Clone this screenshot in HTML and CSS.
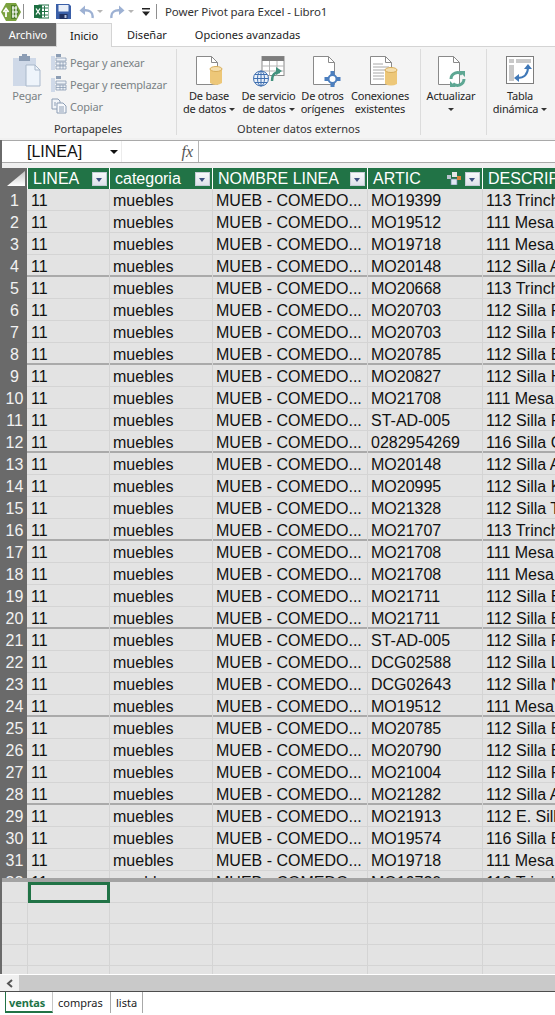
FILE: index.html
```html
<!DOCTYPE html>
<html lang="es">
<head>
<meta charset="utf-8">
<title>Power Pivot para Excel - Libro1</title>
<link rel="stylesheet" href="styles.css">
</head>
<body>
<div class="app">
  <header class="titlebar">
    <svg class="qat-logo" width="20" height="18" viewBox="0 0 20 18"><path d="M5 0h10l5 9-5 9H5L0 9z" fill="#7ba23f"/><path d="M10 2h5l3 7-3 7h-5z" fill="#4f7f2a"/><path d="M11 5h5M11 9h6M11 13h5M12 3v12M15 3v12" stroke="#fff" stroke-width="1.2" fill="none"/><path d="M5 14V8M2.500 9 5 5.500 7.500 9" stroke="#fff" stroke-width="1.800" fill="none"/></svg>
    <i class="qat-sep qat-sep-a"></i>
    <svg class="qat-excel" width="15" height="15" viewBox="0 0 15 15"><rect x="5" y="1" width="10" height="13" fill="#fff" stroke="#217346"/><path d="M7 4h7M7 7.500h7M7 11h7M10.500 2v11" stroke="#217346"/><rect y="1" width="8" height="13" fill="#1e6f42"/><path d="M2 4.500 6 10.500M6 4.500 2 10.500" stroke="#fff" stroke-width="1.300"/></svg>
    <svg class="qat-save" width="15" height="15" viewBox="0 0 15 15"><path d="M0 0h13l2 2v13H0z" fill="#3a5fa8"/><rect x="2.500" y="1" width="10" height="6.500" fill="#e8eef8"/><rect x="3.500" y="10" width="8" height="5" fill="#20305f"/><rect x="8.500" y="11" width="2" height="3" fill="#b7c4df"/></svg>
    <svg class="qat-undo" width="15" height="14" viewBox="0 0 15 14"><path d="M13.500 13C14.500 7 10 4.500 4 5.500" fill="none" stroke="#9db1d3" stroke-width="2.400"/><path d="M6 .5 0.500 5.500 6 10z" fill="#9db1d3"/></svg>
    <i class="caret caret-pale qat-c1"></i>
    <svg class="qat-redo" width="15" height="14" viewBox="0 0 15 14"><path d="M1.500 13C.5 7 5 4.500 11 5.500" fill="none" stroke="#9db1d3" stroke-width="2.400"/><path d="M9 .5 14.500 5.500 9 10z" fill="#9db1d3"/></svg>
    <i class="caret caret-pale qat-c2"></i>
    <svg class="qat-custom" width="8" height="8" viewBox="0 0 8 8"><path d="M0 0h8v1.500H0zM0 3.500h8L4 8z" fill="#222"/></svg>
    <i class="qat-sep qat-sep-b"></i>
    <span class="title-text">Power Pivot para Excel - Libro1</span>
  </header>

  <nav class="tabs">
    <span class="tab tab-file">Archivo</span>
    <span class="tab tab-active">Inicio</span>
    <span class="tab tab-design">Diseñar</span>
    <span class="tab tab-adv">Opciones avanzadas</span>
  </nav>

  <section class="ribbon">
    <div class="group group-clip">
      <div class="group-body">
        <div class="btn btn-paste">
          <svg class="btn-icon" width="28" height="34" viewBox="0 0 28 34"><rect x="0" y="4" width="23" height="28" fill="#cfd9e8"/><rect x="6" y="2" width="11" height="5" fill="#8c9db4"/><rect x="9" y="0" width="5" height="3" fill="#8c9db4"/><path d="M13 11h9l5 5v16H13z" fill="#eef4fb" stroke="#a9b8cb"/><path d="M22 11v5h5" fill="none" stroke="#a9b8cb"/></svg>
          <span class="lbl lbl-muted">Pegar</span>
        </div>
        <div class="small-col">
          <div class="small-btn">
            <svg width="16" height="16" viewBox="0 0 16 16"><rect y="2" width="4" height="14" fill="#cfd9e8"/><rect x="5" y="0" width="5" height="3" fill="#8c9db4"/><path d="M5 4h10v3H5zM5 8h10v3H5zM5 12h10v3H5z" fill="#eef2f7" stroke="#8c9db4" stroke-width=".8"/><path d="M9 8v7M12 8v7" stroke="#8c9db4" stroke-width=".8"/></svg>
            <span class="lbl-muted">Pegar y anexar</span>
          </div>
          <div class="small-btn">
            <svg width="16" height="16" viewBox="0 0 16 16"><rect y="2" width="4" height="14" fill="#cfd9e8"/><rect x="5" y="0" width="5" height="3" fill="#8c9db4"/><path d="M5 5h10v3H5zM5 9h10v5H5z" fill="#eef2f7" stroke="#8c9db4" stroke-width=".8"/><path d="M5 11.500h10M9 9v5M12 9v5" stroke="#8c9db4" stroke-width=".8"/></svg>
            <span class="lbl-muted">Pegar y reemplazar</span>
          </div>
          <div class="small-btn">
            <svg width="16" height="16" viewBox="0 0 16 16"><path d="M1 1h6l2 2v8H1z" fill="#f2f5f9" stroke="#8c9db4"/><path d="M6 5h6l3 3v7H6z" fill="#f7f9fc" stroke="#8c9db4"/><path d="M3 5h2M3 7h2M8 9h5M8 11h5M8 13h5" stroke="#8c9db4"/></svg>
            <span class="lbl-muted">Copiar</span>
          </div>
        </div>
      </div>
      <div class="group-name">Portapapeles</div>
    </div>

    <div class="group group-ext">
      <div class="group-body">
        <div class="btn btn-base">
          <svg class="btn-icon" width="44" height="32" viewBox="0 0 44 32"><path d="M9.500 .5h15l6 6v22h-21z" fill="#fff" stroke="#8a8a8a"/><path d="M24.500 .5v6h6" fill="none" stroke="#8a8a8a"/><path d="M23 13h12v14q-6 4-12 0z" fill="#edc778"/><ellipse cx="29" cy="13" rx="6" ry="2.500" fill="#f5dfae" stroke="#d8ad5a"/></svg>
          <span class="lbl">De base</span>
          <span class="lbl">de datos<i class="caret"></i></span>
        </div>
        <div class="btn btn-serv">
          <svg class="btn-icon" width="44" height="32" viewBox="0 0 44 32"><rect x="10" y=".5" width="22" height="19" fill="#fff" stroke="#8a8a8a"/><rect x="10" y=".5" width="22" height="4.500" fill="#7d7d7d"/><path d="M10 10h22M10 15h22M17.500 5v15M25 5v15" stroke="#b5b5b5"/><path d="M20 25c0-7 3-9 8-9" fill="none" stroke="#41917d" stroke-width="2.400"/><path d="M24 11h8l-4 6z" fill="#41917d" transform="rotate(-90 28 15)"/><circle cx="9" cy="22.500" r="7.500" fill="#eaf1fa" stroke="#3f6fb0"/><path d="M1.500 22.500h15M9 15v15M2.800 18.500h12.400M2.800 26.500h12.400" stroke="#3f6fb0"/><ellipse cx="9" cy="22.500" rx="3.500" ry="7.500" fill="none" stroke="#3f6fb0"/></svg>
          <span class="lbl">De servicio</span>
          <span class="lbl">de datos<i class="caret"></i></span>
        </div>
        <div class="btn btn-other">
          <svg class="btn-icon" width="44" height="32" viewBox="0 0 44 32"><path d="M9.500 .5h15l6 6v22h-21z" fill="#fff" stroke="#8a8a8a"/><path d="M24.500 .5v6h6" fill="none" stroke="#8a8a8a"/><circle cx="28.500" cy="23" r="4" fill="#fff" stroke="#4c7fbf" stroke-width="2"/><path d="M26.500 15h4v4h-4zM26.500 27h4v4h-4zM20.500 21h4v4h-4zM32.500 21h4v4h-4z" fill="#4c7fbf"/></svg>
          <span class="lbl">De otros</span>
          <span class="lbl">orígenes</span>
        </div>
        <div class="btn btn-conn">
          <svg class="btn-icon" width="44" height="32" viewBox="0 0 44 32"><path d="M9.500 .5h15l6 6v22h-21z" fill="#fff" stroke="#8a8a8a"/><path d="M24.500 .5v6h6" fill="none" stroke="#8a8a8a"/><path d="M12 8h10M12 11h16M12 14h16M12 17h11M12 20h11M12 23h11" stroke="#a8a8a8"/><path d="M24 14h12v14q-6 3-12 0z" fill="#edc778"/><ellipse cx="30" cy="14" rx="6" ry="2.500" fill="#f5dfae" stroke="#d8ad5a"/></svg>
          <span class="lbl">Conexiones</span>
          <span class="lbl">existentes</span>
        </div>
      </div>
      <div class="group-name">Obtener datos externos</div>
    </div>

    <div class="group group-upd">
      <div class="group-body">
        <div class="btn btn-upd">
          <svg class="btn-icon" width="44" height="32" viewBox="0 0 44 32"><path d="M9.500 .5h15l6 6v22h-21z" fill="#fff" stroke="#8a8a8a"/><path d="M24.500 .5v6h6" fill="none" stroke="#8a8a8a"/><path d="M22 23a6.500 6.500 0 0 1 11-4.500" fill="none" stroke="#5ea793" stroke-width="3"/><path d="M35 23a6.500 6.500 0 0 1-11 4.500" fill="none" stroke="#5ea793" stroke-width="3"/><path d="M30 15h6v6zM27 31h-6v-6z" fill="#5ea793"/></svg>
          <span class="lbl">Actualizar</span>
          <span class="lbl"><i class="caret caret-solo"></i></span>
        </div>
      </div>
    </div>

    <div class="group group-pivot">
      <div class="group-body">
        <div class="btn btn-pivot">
          <svg class="btn-icon" width="44" height="32" viewBox="0 0 44 32"><rect x="8.500" y=".5" width="27" height="27" fill="#fff" stroke="#7d7d7d"/><rect x="11" y="3" width="5" height="4" fill="#c9c9c9"/><rect x="18" y="3" width="15" height="4" fill="#c9c9c9"/><rect x="11" y="9" width="5" height="16" fill="#c9c9c9"/><path d="M19 22c7 0 11-4 11-11" fill="none" stroke="#3f78b8" stroke-width="2"/><path d="M26 13l4-5 4 5zM21 18l-5 4 5 4z" fill="#3f78b8"/></svg>
          <span class="lbl">Tabla</span>
          <span class="lbl">dinámica<i class="caret"></i></span>
        </div>
      </div>
    </div>
  </section>

  <div class="ribbon-gap"></div>

  <main class="sheet">
    <div class="formula">
      <div class="namebox"><span class="nb-text">[LINEA]</span><i class="caret caret-dark"></i></div>
      <div class="fx">fx</div>
      <div class="formula-input"></div>
    </div>
    <div class="head-gap"></div>
    <div class="table">
      <div class="row-grid head">
        <div class="corner"><svg width="25" height="20" viewBox="0 0 25 20"><defs><linearGradient id="cg" x1="0" y1="0" x2="0" y2="1"><stop offset="0" stop-color="#c4c4c4"/><stop offset="1" stop-color="#fff"/></linearGradient></defs><path d="M5 18 23 3v15z" fill="url(#cg)"/></svg></div>
        <div class="hc"><span>LINEA</span><i class="filter"></i></div>
        <div class="hc"><span>categoria</span><i class="filter"></i></div>
        <div class="hc"><span>NOMBRE LINEA</span><i class="filter"></i></div>
        <div class="hc"><span>ARTIC</span><svg class="rel" width="15" height="13" viewBox="0 0 15 13"><rect x="6" y="0" width="5" height="5" fill="#e6e6e6"/><rect x="1" y="3" width="4" height="4" fill="#b9c3cf"/><rect x="5" y="7" width="6" height="6" fill="#dfe8f3" stroke="#6d87a8" stroke-width=".7"/><path d="M11 4h4v4h-4z" fill="#d8823c"/></svg><i class="filter"></i></div>
        <div class="hc"><span>DESCRIPCION</span></div>
      </div>
      <div class="rows">
        <div class="row-grid row"><b>1</b><span>11</span><span>muebles</span><span>MUEB - COMEDO...</span><span>MO19399</span><span>113 Trinchero</span></div>
        <div class="row-grid row"><b>2</b><span>11</span><span>muebles</span><span>MUEB - COMEDO...</span><span>MO19512</span><span>111 Mesa</span></div>
        <div class="row-grid row"><b>3</b><span>11</span><span>muebles</span><span>MUEB - COMEDO...</span><span>MO19718</span><span>111 Mesa</span></div>
        <div class="row-grid row sep"><b>4</b><span>11</span><span>muebles</span><span>MUEB - COMEDO...</span><span>MO20148</span><span>112 Silla A</span></div>
        <div class="row-grid row"><b>5</b><span>11</span><span>muebles</span><span>MUEB - COMEDO...</span><span>MO20668</span><span>113 Trinchero</span></div>
        <div class="row-grid row"><b>6</b><span>11</span><span>muebles</span><span>MUEB - COMEDO...</span><span>MO20703</span><span>112 Silla F</span></div>
        <div class="row-grid row"><b>7</b><span>11</span><span>muebles</span><span>MUEB - COMEDO...</span><span>MO20703</span><span>112 Silla F</span></div>
        <div class="row-grid row sep"><b>8</b><span>11</span><span>muebles</span><span>MUEB - COMEDO...</span><span>MO20785</span><span>112 Silla B</span></div>
        <div class="row-grid row"><b>9</b><span>11</span><span>muebles</span><span>MUEB - COMEDO...</span><span>MO20827</span><span>112 Silla H</span></div>
        <div class="row-grid row"><b>10</b><span>11</span><span>muebles</span><span>MUEB - COMEDO...</span><span>MO21708</span><span>111 Mesa</span></div>
        <div class="row-grid row"><b>11</b><span>11</span><span>muebles</span><span>MUEB - COMEDO...</span><span>ST-AD-005</span><span>112 Silla F</span></div>
        <div class="row-grid row sep"><b>12</b><span>11</span><span>muebles</span><span>MUEB - COMEDO...</span><span>0282954269</span><span>116 Silla C</span></div>
        <div class="row-grid row"><b>13</b><span>11</span><span>muebles</span><span>MUEB - COMEDO...</span><span>MO20148</span><span>112 Silla A</span></div>
        <div class="row-grid row"><b>14</b><span>11</span><span>muebles</span><span>MUEB - COMEDO...</span><span>MO20995</span><span>112 Silla K</span></div>
        <div class="row-grid row"><b>15</b><span>11</span><span>muebles</span><span>MUEB - COMEDO...</span><span>MO21328</span><span>112 Silla T</span></div>
        <div class="row-grid row sep"><b>16</b><span>11</span><span>muebles</span><span>MUEB - COMEDO...</span><span>MO21707</span><span>113 Trinchero</span></div>
        <div class="row-grid row"><b>17</b><span>11</span><span>muebles</span><span>MUEB - COMEDO...</span><span>MO21708</span><span>111 Mesa</span></div>
        <div class="row-grid row"><b>18</b><span>11</span><span>muebles</span><span>MUEB - COMEDO...</span><span>MO21708</span><span>111 Mesa</span></div>
        <div class="row-grid row"><b>19</b><span>11</span><span>muebles</span><span>MUEB - COMEDO...</span><span>MO21711</span><span>112 Silla B</span></div>
        <div class="row-grid row sep"><b>20</b><span>11</span><span>muebles</span><span>MUEB - COMEDO...</span><span>MO21711</span><span>112 Silla B</span></div>
        <div class="row-grid row"><b>21</b><span>11</span><span>muebles</span><span>MUEB - COMEDO...</span><span>ST-AD-005</span><span>112 Silla F</span></div>
        <div class="row-grid row"><b>22</b><span>11</span><span>muebles</span><span>MUEB - COMEDO...</span><span>DCG02588</span><span>112 Silla L</span></div>
        <div class="row-grid row"><b>23</b><span>11</span><span>muebles</span><span>MUEB - COMEDO...</span><span>DCG02643</span><span>112 Silla N</span></div>
        <div class="row-grid row sep"><b>24</b><span>11</span><span>muebles</span><span>MUEB - COMEDO...</span><span>MO19512</span><span>111 Mesa</span></div>
        <div class="row-grid row"><b>25</b><span>11</span><span>muebles</span><span>MUEB - COMEDO...</span><span>MO20785</span><span>112 Silla B</span></div>
        <div class="row-grid row"><b>26</b><span>11</span><span>muebles</span><span>MUEB - COMEDO...</span><span>MO20790</span><span>112 Silla B</span></div>
        <div class="row-grid row"><b>27</b><span>11</span><span>muebles</span><span>MUEB - COMEDO...</span><span>MO21004</span><span>112 Silla F</span></div>
        <div class="row-grid row sep"><b>28</b><span>11</span><span>muebles</span><span>MUEB - COMEDO...</span><span>MO21282</span><span>112 Silla A</span></div>
        <div class="row-grid row"><b>29</b><span>11</span><span>muebles</span><span>MUEB - COMEDO...</span><span>MO21913</span><span>112 E. Silla</span></div>
        <div class="row-grid row"><b>30</b><span>11</span><span>muebles</span><span>MUEB - COMEDO...</span><span>MO19574</span><span>116 Silla B</span></div>
        <div class="row-grid row"><b>31</b><span>11</span><span>muebles</span><span>MUEB - COMEDO...</span><span>MO19718</span><span>111 Mesa</span></div>
        <div class="row-grid row"><b>32</b><span>11</span><span>muebles</span><span>MUEB - COMEDO...</span><span>MO19720</span><span>113 Trinchero</span></div>
      </div>
      <div class="freeze"></div>
      <div class="blank">
        <div class="row-grid brow"><s></s><s class="selected"></s><s></s><s></s><s></s><s></s></div>
        <div class="row-grid brow"><s></s><s></s><s></s><s></s><s></s><s></s></div>
        <div class="row-grid brow"><s></s><s></s><s></s><s></s><s></s><s></s></div>
        <div class="row-grid brow"><s></s><s></s><s></s><s></s><s></s><s></s></div>
        <div class="row-grid brow"><s></s><s></s><s></s><s></s><s></s><s></s></div>
      </div>
    </div>
  </main>

  <div class="scrollbar">
    <div class="scroll-left"><svg width="7" height="9" viewBox="0 0 7 9"><path d="M6 1 2 4.500 6 8" fill="none" stroke="#555" stroke-width="2"/></svg></div>
    <div class="scroll-track"></div>
  </div>

  <footer class="sheet-tabs">
    <span class="stab stab-on">ventas</span>
    <span class="stab stab-b">compras</span>
    <span class="stab stab-c">lista</span>
  </footer>
</div>
</body>
</html>
```
FILE: styles.css
```css
* { box-sizing: border-box; }
html, body { margin: 0; padding: 0; background: #fff; }
.app { width: 555px; height: 1015px; overflow: hidden; display: flex; flex-direction: column; font-family: "Noto Sans", sans-serif; font-size: 11px; letter-spacing: -0.2px; color: #262626; }

.titlebar { height: 23px; display: flex; align-items: center; background: #fff; flex: none; }
.titlebar svg, .titlebar i { flex: none; }
.qat-logo { margin-left: 1px; }
.qat-sep { width: 1px; height: 15px; background: #8f8f8f; }
.qat-sep-a { margin-left: 2px; }
.qat-excel { margin-left: 10px; }
.qat-save { margin-left: 7px; }
.qat-undo { margin-left: 8px; }
.qat-c1 { margin-left: 5px; }
.qat-redo { margin-left: 7px; }
.qat-c2 { margin-left: 5px; }
.qat-custom { margin-left: 8px; }
.qat-sep-b { margin-left: 6px; }
.title-text { margin-left: 8px; font-size: 11.500px; letter-spacing: -0.1px; color: #333; white-space: nowrap; }

.caret { display: inline-block; width: 0; height: 0; margin-left: 3px; vertical-align: 2px; border-left: 3px solid transparent; border-right: 3px solid transparent; border-top: 3px solid #333; }
.caret-pale { border-top-color: #b5b5b5; }
.caret-solo { margin-left: 0; }
.caret-dark { margin-left: 0; border-left-width: 4px; border-right-width: 4px; border-top: 4px solid #111; }

.tabs { height: 23px; display: flex; flex: none; position: relative; background: #fff; letter-spacing: 0; }
.tab { display: flex; align-items: center; justify-content: center; }
.tab-file { width: 56px; background: #6c6c6c; color: #fff; }
.tab-active { width: 56px; background: #f4f4f4; border: 1px solid #d4d4d4; border-bottom: 0; margin-bottom: -1px; z-index: 1; color: #111; }
.tab-design { margin-left: 15px; color: #222; }
.tab-adv { margin-left: 28px; color: #222; }

.ribbon { height: 92px; flex: none; display: flex; background: #f4f4f4; border-top: 1px solid #d4d4d4; }
.group { display: flex; flex-direction: column; border-right: 1px solid #dcdcdc; margin: 2px 0 3px; }
.group:last-child { border-right: 0; }
.group-clip { width: 177px; }
.group-ext { width: 244px; }
.group-upd { width: 66px; }
.group-pivot { width: 68px; }
.group-body { flex: 1; display: flex; min-height: 0; }
.group-name { height: 13px; text-align: center; line-height: 13px; letter-spacing: 0; color: #333; white-space: nowrap; }
.btn { display: flex; flex-direction: column; align-items: center; flex: none; padding-top: 7px; white-space: nowrap; }
.btn-icon { flex: none; margin-bottom: 1px; }
.lbl { display: block; height: 13px; line-height: 13px; }
.lbl-muted { color: #7a8285; }
.btn-paste { width: 54px; padding-top: 5px; margin-right: -3px; }
.small-col { display: flex; flex-direction: column; gap: 6px; padding-top: 5px; }
.small-btn { height: 16px; display: flex; align-items: center; gap: 3px; white-space: nowrap; }
.btn-base { width: 60px; margin-left: 2px; }
.btn-serv { width: 57px; margin-left: 1px; }
.btn-serv .btn-icon { margin-left: 10px; }
.btn-other { width: 47px; margin-left: 2px; }
.btn-other .btn-icon { margin-left: 6px; }
.btn-conn { width: 64px; margin-left: 2px; }
.btn-conn .btn-icon { margin-left: 6px; }
.btn-upd { width: 60px; margin-left: 0; }
.btn-pivot { width: 66px; margin-left: 0; }

.ribbon-gap { height: 2px; flex: none; background: #f0f0f0; }

.sheet { flex: 1; min-height: 0; display: flex; flex-direction: column; background: #e3e3e3; border-left: 2px solid #6a6a6a; overflow: hidden; font-family: "Liberation Sans", Arial, sans-serif; font-size: 16px; letter-spacing: 0; color: #111; }
.formula { height: 23px; flex: none; display: flex; background: #fff; border-top: 1px solid #a9a9a9; border-bottom: 1px solid #a9a9a9; margin-left: -2px; padding-left: 2px; }
.namebox { width: 120px; display: flex; align-items: center; justify-content: space-between; padding: 0 3px 0 25px; border-right: 1px solid #ececec; }
.fx { width: 77px; border-right: 1px solid #b5b5b5; font-family: "Liberation Serif", serif; font-style: italic; font-size: 16px; color: #555; text-align: right; padding-right: 5px; line-height: 21px; }
.formula-input { flex: 1; }
.head-gap { height: 5px; flex: none; background: #f0f0f0; }
.table { flex: 1; min-height: 0; display: flex; flex-direction: column; }
.row-grid { display: grid; grid-template-columns: 26px 82px 103px 155px 115px 1fr; }
.head { height: 21px; flex: none; background: #fff; }
.corner { background: #6a6a6a; margin-right: 1px; display: flex; }
.hc { background: #217346; color: #fff; display: flex; align-items: center; padding: 0 2px 0 5px; margin-right: 1px; white-space: nowrap; overflow: hidden; }
.hc span { flex: 1; line-height: 20px; }
.hc:last-child { margin-right: 0; }
.filter { flex: none; width: 15px; height: 14px; position: relative; background: linear-gradient(#f7f8fa, #dde2ea); border: 1px solid #c5ccd6; }
.filter::after { content: ""; position: absolute; left: 3px; top: 5px; border-left: 3px solid transparent; border-right: 3px solid transparent; border-top: 4px solid #3c4f80; }
.rel { flex: none; margin-right: 4px; }

.rows { height: 689px; flex: none; overflow: hidden; }
.row { height: 22px; border-bottom: 1px solid #d4d4d4; line-height: 23px; }
.row.sep { border-bottom: 2px solid #aaa; }
.row > b { font-weight: 400; background: #6a6a6a; color: #f2f2f2; text-align: center; margin-right: 1px; }
.row > span { padding-left: 3px; border-right: 1px solid #d4d4d4; white-space: nowrap; overflow: hidden; }
.row > span:last-child { border-right: 0; }
.freeze { height: 4px; flex: none; background: #a3a3a3; }
.blank { flex: 1; min-height: 0; overflow: hidden; }
.brow { height: 21px; border-bottom: 1px solid #d4d4d4; }
.brow > s { display: block; border-right: 1px solid #d4d4d4; }
.brow > s:last-child { border-right: 0; }
.brow > s.selected { border: 3px solid #217346; margin-right: 0; margin-bottom: -1px; }

.scrollbar { height: 18px; flex: none; display: flex; background: #c9c9c9; border-top: 1px solid #fff; border-bottom: 1px solid #4d4d4d; }
.scroll-left { width: 19px; background: #f0f0f0; display: flex; align-items: center; justify-content: center; }
.scroll-track { flex: 1; }

.sheet-tabs { height: 23px; flex: none; display: flex; align-items: flex-start; background: #fff; padding-left: 5px; letter-spacing: 0; }
.stab { height: 21px; line-height: 22px; white-space: nowrap; color: #222; }
.stab-on { width: 48px; padding-left: 3px; font-weight: 700; letter-spacing: -0.1px; color: #217346; border-left: 1px solid #217346; border-right: 1px solid #c6c6c6; border-bottom: 2px solid #217346; }
.stab-b { width: 58px; padding-left: 5px; border-right: 1px solid #a8a8a8; }
.stab-c { width: 32px; padding-left: 5px; border-right: 1px solid #a8a8a8; }
```
